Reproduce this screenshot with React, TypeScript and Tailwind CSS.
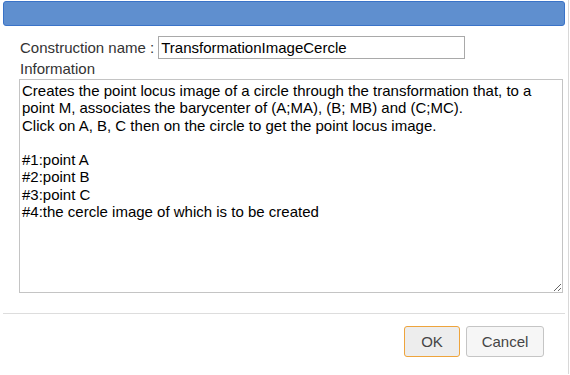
import React from "react";

const info =
  "Creates the point locus image of a circle through the transformation that, to a\npoint M, associates the barycenter of (A;MA), (B; MB) and (C;MC).\nClick on A, B, C then on the circle to get the point locus image.\n\n#1:point A\n#2:point B\n#3:point C\n#4:the cercle image of which is to be created";

export default function App() {
  return (
    <div className="w-[570px] h-[375px] bg-white font-['Liberation_Sans',Arial,sans-serif] text-[15px] leading-[17.25px] text-[#333333]">
      <div className="w-[569px] h-[374px] border-r border-[#d8d8d8] pt-[1px] px-[3px] flex flex-col">
        <div className="h-[25px] rounded-[3px] bg-[#5f8fcf] border border-[#3a73c8]" />
        <div className="pl-[16px] pt-[10px] flex flex-col">
          <div className="flex items-center h-[23px]">
            <span className="pl-[1px]">Construction name :</span>
            <input
              readOnly
              defaultValue="TransformationImageCercle"
              className="ml-[4px] w-[307px] h-[23px] border border-[#a9a9a9] px-[2px] text-[15px] text-black outline-none font-['Liberation_Sans',Arial,sans-serif]"
            />
          </div>
          <div className="h-[19px] mt-[1px] pl-[1px]">Information</div>
          <textarea
            readOnly
            defaultValue={info}
            className="w-[544px] h-[214px] border border-[#c4c4c4] p-[2px] text-[15px] leading-[17.25px] text-black resize outline-none font-['Liberation_Sans',Arial,sans-serif]"
          />
        </div>
        <div className="mt-[20px] border-t border-[#dddddd]" />
        <div className="flex justify-end gap-[6px] pr-[21px] mt-[12px]">
          <button className="w-[56px] h-[31px] rounded-[3px] bg-[#ededed] border border-[#eea43c] text-[#454545] text-[15px]">
            OK
          </button>
          <button className="w-[78px] h-[31px] rounded-[3px] bg-[#f6f6f6] border border-[#c5c5c5] text-[#454545] text-[15px]">
            Cancel
          </button>
        </div>
      </div>
    </div>
  );
}
